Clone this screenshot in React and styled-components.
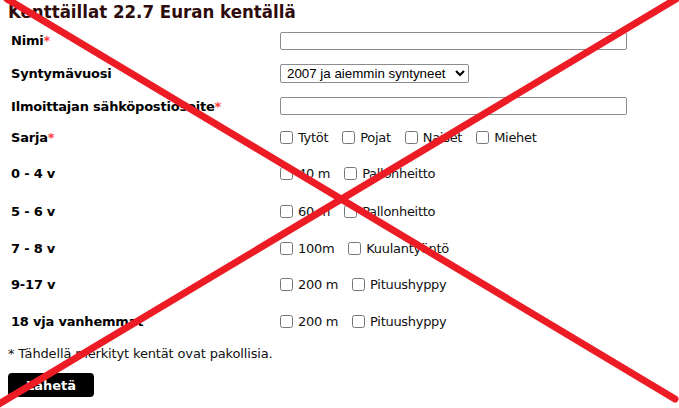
import React from 'react';
import styled, { createGlobalStyle } from 'styled-components';

const GlobalStyle = createGlobalStyle`
  html, body {
    margin: 0;
    padding: 0;
    background: #ffffff;
  }
  body {
    font-family: "DejaVu Sans", Verdana, sans-serif;
    color: #000000;
    overflow: hidden;
  }
`;

const Page = styled.div`
  position: relative;
  width: 679px;
  height: 408px;
  padding: 0 8px;
  box-sizing: border-box;
  overflow: hidden;
`;

const Title = styled.h3`
  margin: 0;
  font-family: "DejaVu Sans Condensed", "DejaVu Sans", Verdana, sans-serif;
  font-stretch: condensed;
  font-size: 18.5px;
  line-height: 24px;
  font-weight: bold;
  color: #2e0c0c;
  white-space: nowrap;
`;

const FormGrid = styled.div`
  display: grid;
  grid-template-columns: 272px 1fr;
`;

const Label = styled.div`
  display: flex;
  align-items: center;
  height: ${p => p.h}px;
  padding-left: 3px;
  font-size: 13px;
  font-weight: bold;
  letter-spacing: -0.2px;
  white-space: nowrap;
`;

const Req = styled.span`
  color: #ff3c3c;
  font-weight: bold;
`;

const Field = styled.div`
  display: flex;
  align-items: center;
  height: ${p => p.h}px;
`;

const TextInput = styled.input`
  box-sizing: border-box;
  width: 347px;
  height: 18px;
  margin: 0;
  padding: 0 2px;
  border: 1px solid #8c8c8c;
  border-radius: 2px;
  font: 13.33px "Liberation Sans", Arial, sans-serif;
  background: #fff;
`;

const Select = styled.select`
  box-sizing: border-box;
  width: 189px;
  height: 19px;
  margin: 0;
  padding: 0 0 0 2px;
  border: 1px solid #8c8c8c;
  border-radius: 2px;
  font: 13.33px "Liberation Sans", Arial, sans-serif;
  color: #000;
  background: #fff;
`;

const Options = styled.div`
  display: flex;
  align-items: center;
  gap: 14px;
`;

const Option = styled.label`
  display: flex;
  align-items: center;
  font-size: 13px;
  letter-spacing: -0.3px;
  color: #111;
  white-space: nowrap;
`;

const Check = styled.input`
  width: 13px;
  height: 13px;
  margin: 0 5px 0 0;
`;

const Note = styled.p`
  margin: 0;
  height: 26px;
  display: flex;
  align-items: center;
  font-size: 13px;
  letter-spacing: -0.15px;
  color: #111;
`;

const SendButton = styled.button`
  margin-top: 7px;
  width: 86px;
  height: 24px;
  border: none;
  border-radius: 4px;
  background: #000;
  color: #fff;
  font: bold 13px "DejaVu Sans", Verdana, sans-serif;
  padding: 0;
`;

const Cross = styled.svg`
  position: absolute;
  left: 0;
  top: 0;
  pointer-events: none;
`;

const rows = [
  { label: 'Nimi', req: true, h: 33, type: 'text' },
  { label: 'Syntymävuosi', h: 33, type: 'select' },
  { label: 'Ilmoittajan sähköpostiosoite', req: true, h: 32, type: 'text' },
  { label: 'Sarja', req: true, h: 31, options: ['Tytöt', 'Pojat', 'Naiset', 'Miehet'] },
  { label: '0 - 4 v', h: 40, options: ['40 m', 'Pallonheitto'] },
  { label: '5 - 6 v', h: 37, options: ['60 m', 'Pallonheitto'] },
  { label: '7 - 8 v', h: 36, options: ['100m', 'Kuulantyöntö'] },
  { label: '9-17 v', h: 37, options: ['200 m', 'Pituushyppy'] },
  { label: '18 vja vanhemmat', h: 37, options: ['200 m', 'Pituushyppy'] },
];

const App = () => {
  return (
    <Page>
      <GlobalStyle />
      <Title>Kenttäillat 22.7 Euran kentällä</Title>
      <FormGrid>
        {rows.map(row => (
          <React.Fragment key={row.label}>
            <Label h={row.h}>
              {row.label}
              {row.req && <Req>*</Req>}
            </Label>
            <Field h={row.h}>
              {row.type === 'text' && <TextInput type="text" />}
              {row.type === 'select' && (
                <Select defaultValue="2007">
                  <option value="2007">2007 ja aiemmin syntyneet</option>
                </Select>
              )}
              {row.options && (
                <Options>
                  {row.options.map((opt, i) => (
                    <Option key={i}>
                      <Check type="checkbox" />
                      {opt}
                    </Option>
                  ))}
                </Options>
              )}
            </Field>
          </React.Fragment>
        ))}
      </FormGrid>
      <Note>* Tähdellä merkityt kentät ovat pakollisia.</Note>
      <SendButton>Lähetä</SendButton>
      <Cross width="679" height="408" viewBox="0 0 679 408">
        <line x1="7" y1="-1" x2="675" y2="399" stroke="#ed1c24" strokeWidth="7" strokeLinecap="round" />
        <line x1="676" y1="-1" x2="-1" y2="404" stroke="#ed1c24" strokeWidth="7" strokeLinecap="round" />
      </Cross>
    </Page>
  );
};

export default App;
